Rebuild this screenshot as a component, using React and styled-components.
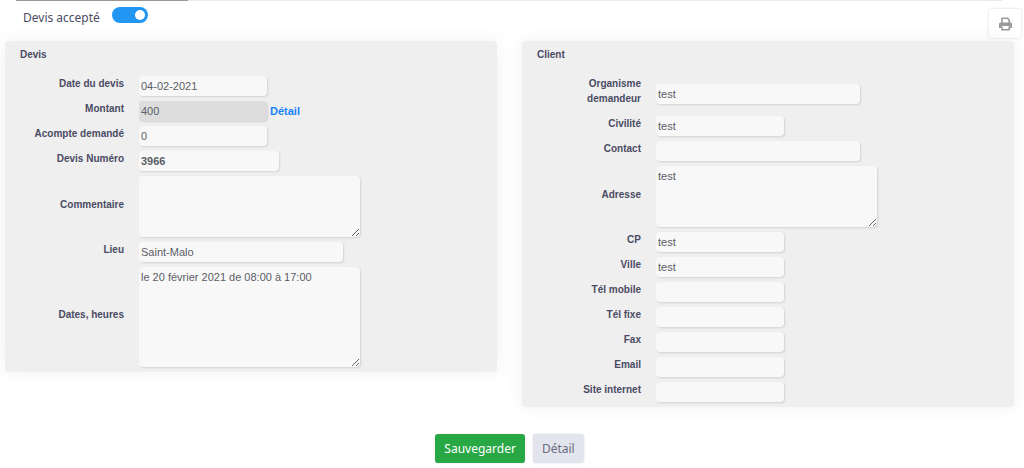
import React from "react"
import styled, { createGlobalStyle } from "styled-components"

const GlobalStyle = createGlobalStyle`
  * {
    box-sizing: border-box;
  }
  body {
    margin: 0;
    background: #fff;
    color: #4a4b63;
    font-family: "Noto Sans", "Segoe UI", sans-serif;
    font-size: 12px;
  }
`

const Page = styled.form`
  padding: 0 10px 5px 5px;
`

const Progress = styled.div`
  height: 1px;
  margin: 0 12px 0 11px;
  background: #e9ecef;
`

const ProgressBar = styled.div`
  height: 1px;
  width: ${props => props.$value}%;
  background: #999;
`

const Header = styled.header`
  display: flex;
  justify-content: space-between;
  align-items: flex-start;
  height: 40px;
  padding-left: 18px;
  margin-right: -7px;
`

const SwitchLabel = styled.label`
  display: flex;
  align-items: flex-start;
  gap: 12px;
  padding-top: 6px;
  line-height: 21px;
`

const Switch = styled.input`
  appearance: none;
  display: flex;
  justify-content: flex-start;
  width: 36px;
  height: 16px;
  margin: 0;
  padding: 3px;
  border-radius: 8px;
  background: #ccc;
  cursor: pointer;
  &::before {
    content: "";
    width: 10px;
    height: 10px;
    border-radius: 50%;
    background: #fff;
  }
  &:checked {
    justify-content: flex-end;
    background: #2196f3;
  }
`

const PrintButton = styled.button`
  display: flex;
  align-items: center;
  justify-content: center;
  width: 32px;
  height: 29px;
  margin: 8px 0 0;
  padding: 0;
  border: 0;
  border-radius: 3px;
  background: #fff;
  color: #999;
  box-shadow: 0 0 3px rgba(0, 0, 0, 0.16);
`

const Cards = styled.div`
  display: grid;
  grid-template-columns: 1fr 1fr;
  align-items: start;
  gap: 25px;
  @media (max-width: 768px) {
    grid-template-columns: 1fr;
  }
`

const Card = styled.section`
  padding: 6px 15px 0;
  border-radius: 4px;
  background: #efefef;
  box-shadow: 0 0 20px rgba(0, 0, 0, 0.06);
  font-family: "Liberation Sans", Arial, sans-serif;
  font-size: 11px;
`

const CardTitle = styled.h2`
  margin: 0 0 13px;
  font-size: 10px;
  line-height: 16px;
`

const Row = styled.div`
  display: grid;
  grid-template-columns: 104px 1fr;
  align-items: center;
  column-gap: 15px;
`

const RowLabel = styled.label`
  margin-bottom: 10px;
  font-size: 10px;
  font-weight: bold;
  line-height: 15px;
  text-align: right;
`

const Control = styled.div`
  display: flex;
  align-items: center;
  gap: 3px;
  margin-bottom: 5px;
`

const widths = {
  small: "128px",
  medium: "140px",
  large: "204px",
}

const Input = styled.input`
  width: ${props => widths[props.$size || "small"]};
  max-width: 100%;
  height: 20px;
  padding: 0 2px;
  border: 0;
  border-radius: 4px;
  background: ${props => (props.readOnly ? "#dcdcdc" : "#f8f8f8")};
  box-shadow: 1px 1px 2px rgba(0, 0, 0, 0.12);
  color: #5c5d66;
  font-family: inherit;
  font-size: 11px;
  font-weight: ${props => (props.$bold ? "bold" : "normal")};
`

const TextArea = styled.textarea`
  width: 221px;
  max-width: 100%;
  height: ${props => (props.$tall ? "100px" : "61px")};
  padding: 3px 2px;
  border: 0;
  border-radius: 4px;
  background: #f8f8f8;
  box-shadow: 1px 1px 2px rgba(0, 0, 0, 0.12);
  color: #5c5d66;
  font-family: inherit;
  font-size: 11px;
  line-height: 15px;
`

const DetailLink = styled.a`
  color: #1a82fb;
  font-size: 11px;
  font-weight: bold;
  text-decoration: none;
`

const Actions = styled.div`
  display: flex;
  justify-content: center;
  gap: 8px;
  margin-top: 27px;
`

const Button = styled.button`
  height: 29px;
  padding: 0 9px;
  border: 0;
  border-radius: 3px;
  background: ${props => (props.$primary ? "#28a745" : "#e2e5ee")};
  color: ${props => (props.$primary ? "#fff" : "#6b6c80")};
  font-family: inherit;
  font-size: 12px;
  box-shadow: 0 0 2px rgba(0, 0, 0, 0.16);
`

const PrintIcon = () => (
  <svg width="13" height="14" viewBox="0 0 13 14" fill="none">
    <path
      d="M3 6V1.2h5.6L10.2 3v3M3 9.5v3.3h7.2V9.5"
      stroke="currentColor"
      strokeWidth="1.6"
      strokeLinejoin="round"
    />
    <path
      d="M1.8 5.6h9.6A1.6 1.6 0 0 1 13 7.2v3.2a.6.6 0 0 1-.6.6h-1.6V9H2.4v2H.6a.6.6 0 0 1-.6-.6V7.200a1.600 1.600 0 0 1 1.800-1.600z"
      fill="currentColor"
    />
  </svg>
)

const Field = ({ id, label, children, ...input }) => (
  <Row>
    <RowLabel htmlFor={id}>{label}</RowLabel>
    <Control>
      <Input id={id} type="text" {...input} />
      {children}
    </Control>
  </Row>
)

const AreaField = ({ id, label, ...area }) => (
  <Row>
    <RowLabel htmlFor={id}>{label}</RowLabel>
    <Control>
      <TextArea id={id} {...area} />
    </Control>
  </Row>
)

const App = () => (
  <React.Fragment>
    <GlobalStyle />
    <Page onSubmit={e => e.preventDefault()}>
      <Progress>
        <ProgressBar $value={17.4} />
      </Progress>
      <Header>
        <SwitchLabel>
          Devis accepté
          <Switch type="checkbox" role="switch" defaultChecked />
        </SwitchLabel>
        <PrintButton type="button" aria-label="Imprimer">
          <PrintIcon />
        </PrintButton>
      </Header>
      <Cards>
        <Card>
          <CardTitle>Devis</CardTitle>
          <Field id="date" label="Date du devis" defaultValue="04-02-2021" />
          <Field id="montant" label="Montant" defaultValue="400" readOnly>
            <DetailLink href="#detail">Détail</DetailLink>
          </Field>
          <Field id="acompte" label="Acompte demandé" defaultValue="0" />
          <Field
            id="numero"
            label="Devis Numéro"
            defaultValue="3966"
            $size="medium"
            $bold
          />
          <AreaField id="commentaire" label="Commentaire" />
          <Field
            id="lieu"
            label="Lieu"
            defaultValue="Saint-Malo"
            $size="large"
          />
          <AreaField
            id="dates"
            label="Dates, heures"
            defaultValue="le 20 février 2021 de 08:00 à 17:00"
            $tall
          />
        </Card>
        <Card>
          <CardTitle>Client</CardTitle>
          <Field
            id="organisme"
            label="Organisme demandeur"
            defaultValue="test"
            $size="large"
          />
          <Field id="civilite" label="Civilité" defaultValue="test" />
          <Field id="contact" label="Contact" $size="large" />
          <AreaField id="adresse" label="Adresse" defaultValue="test" />
          <Field id="cp" label="CP" defaultValue="test" />
          <Field id="ville" label="Ville" defaultValue="test" />
          <Field id="mobile" label="Tél mobile" />
          <Field id="fixe" label="Tél fixe" />
          <Field id="fax" label="Fax" />
          <Field id="email" label="Email" />
          <Field id="site" label="Site internet" />
        </Card>
      </Cards>
      <Actions>
        <Button type="submit" $primary>
          Sauvegarder
        </Button>
        <Button type="button">Détail</Button>
      </Actions>
    </Page>
  </React.Fragment>
)

export default App
